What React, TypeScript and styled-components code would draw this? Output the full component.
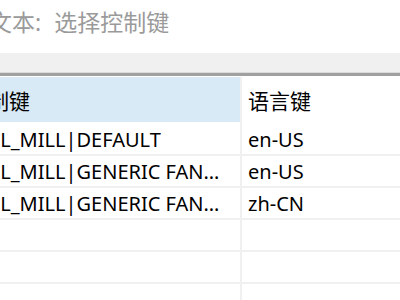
import React from "react";
import styled, { createGlobalStyle } from "styled-components";

const Global = createGlobalStyle`
  html, body { margin: 0; padding: 0; background: #ffffff; }
  body { font-family: "Noto Sans", "Noto Sans CJK SC", sans-serif; overflow: hidden; }
`;

const Page = styled.div`
  width: 400px;
  height: 300px;
  overflow: hidden;
  background: #ffffff;
  display: flex;
  flex-direction: column;
`;

const SearchBar = styled.div`
  height: 53px;
  flex: none;
  overflow: hidden;
  display: flex;
  align-items: flex-start;
`;

const Placeholder = styled.span`
  margin-left: -11px;
  margin-top: 7px;
  font-size: 23px;
  line-height: 30px;
  word-spacing: 7px;
  color: #9a9a9a;
  white-space: nowrap;
`;

const Band = styled.div`
  height: 19px;
  flex: none;
  background: #f0f0f0;
  border-bottom: 1px solid #dadada;
`;

const Divider = styled.div`
  height: 3px;
  flex: none;
  background: #a0a0a0;
  border-bottom: 1px solid #ffffff;
`;

const Grid = styled.div`
  display: grid;
  grid-template-columns: 240px 2px 1fr;
  flex: 1;
  align-content: start;
`;

const Cell = styled.div<{ $header?: boolean; $active?: boolean; $first?: boolean }>`
  height: ${(p) => (p.$header ? "45px" : "30px")};
  background: ${(p) => (p.$active ? "#d9eaf7" : "#ffffff")};
  border-bottom: 2px solid ${(p) => (p.$header ? "#ffffff" : "#f0f0f0")};
  overflow: hidden;
  display: flex;
  align-items: center;
  padding-left: ${(p) => (p.$first ? "0" : "6px")};
  padding-right: ${(p) => (p.$first ? "14px" : "0")};
  font-size: ${(p) => (p.$header ? "21px" : "20px")};
  color: #000000;
`;

const Sep = styled.div`
  background: #f0f0f0;
`;

const Clip = styled.span<{ $shift: number }>`
  display: block;
  margin-left: ${(p) => -p.$shift}px;
  flex: 1;
  min-width: 0;
  white-space: nowrap;
  overflow: hidden;
  text-overflow: ellipsis;
`;

const rows = [
  ["CONTROL_MILL|DEFAULT", "en-US"],
  ["CONTROL_MILL|GENERIC FANCOIL", "en-US"],
  ["CONTROL_MILL|GENERIC FANCOIL", "zh-CN"],
  ["", ""],
  ["", ""],
  ["", ""],
];

export default function App() {
  const shift = 82;
  return (
    <>
      <Global />
      <Page>
        <SearchBar>
          <Placeholder>文本: 选择控制键</Placeholder>
        </SearchBar>
        <Band />
        <Divider />
        <Grid>
          <Cell $header $active $first>
            <Clip $shift={33}>控制键</Clip>
          </Cell>
          <Sep />
          <Cell $header>语言键</Cell>
          {rows.map((r, i) => (
            <React.Fragment key={i}>
              <Cell $first>
                <Clip $shift={shift}>{r[0]}</Clip>
              </Cell>
              <Sep />
              <Cell>{r[1]}</Cell>
            </React.Fragment>
          ))}
        </Grid>
      </Page>
    </>
  );
}
